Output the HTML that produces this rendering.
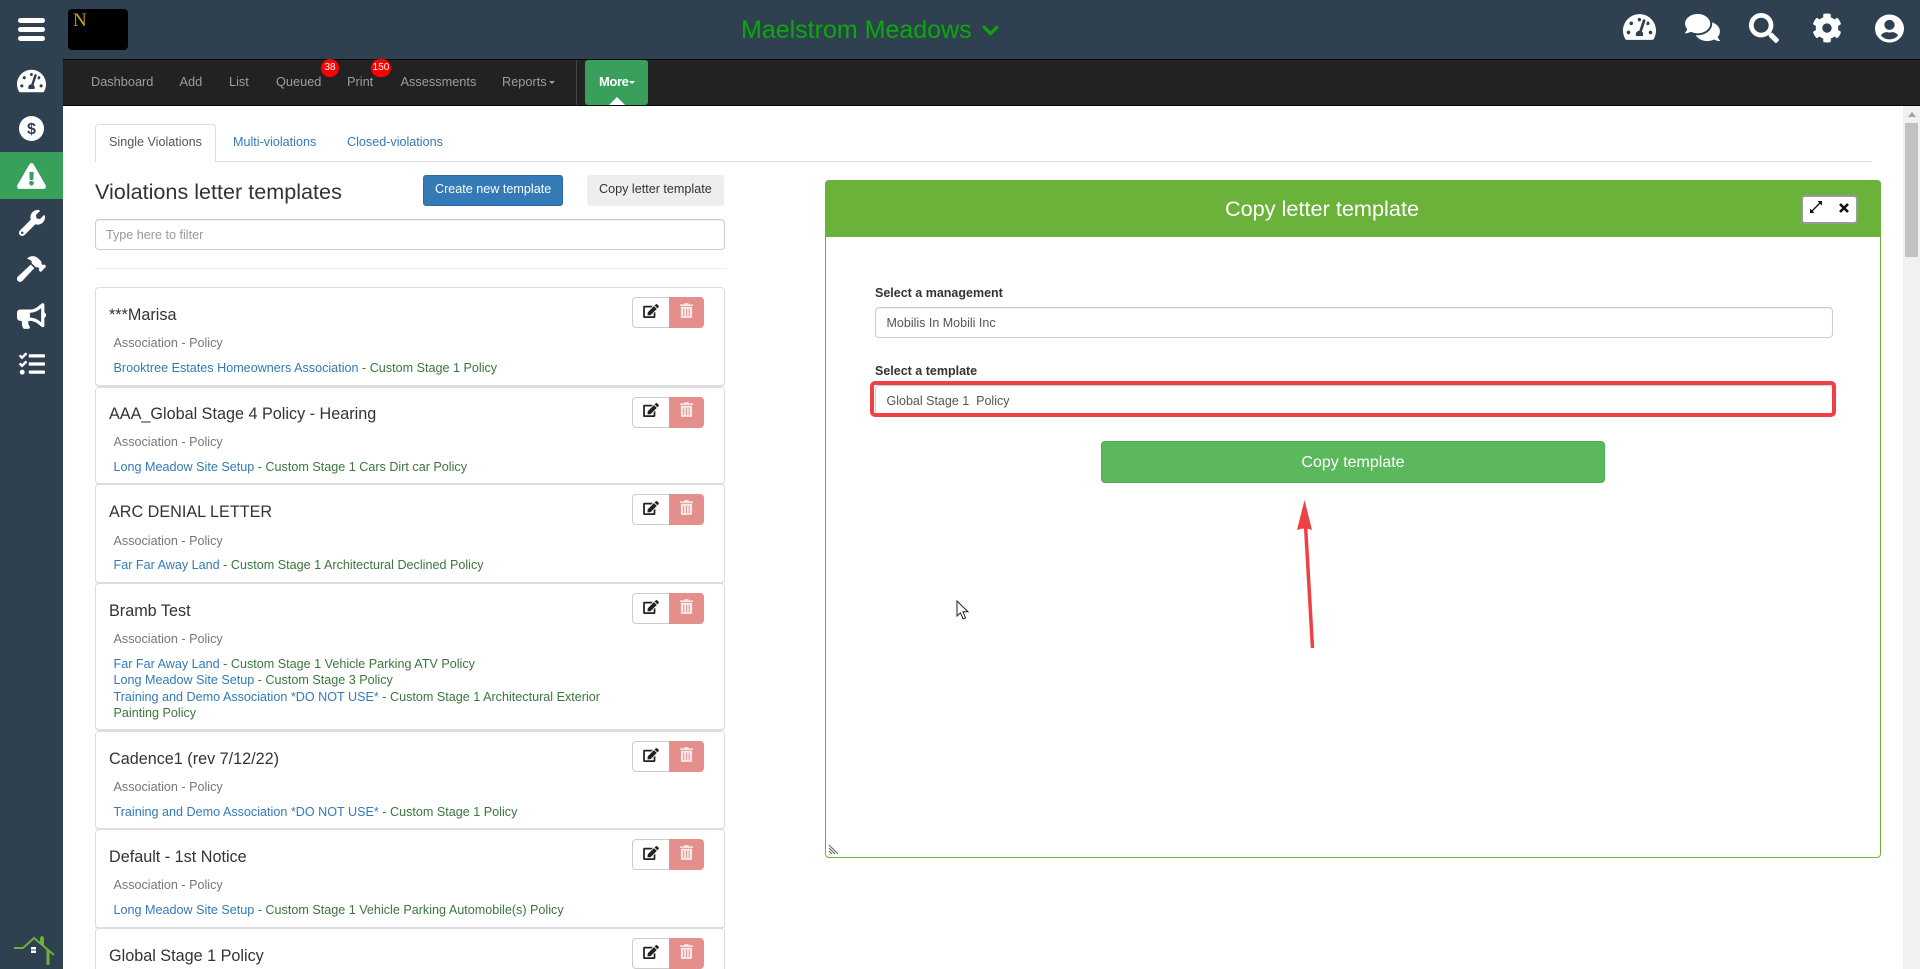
<!DOCTYPE html>
<html lang="en">
<head>
<meta charset="utf-8">
<title>Violations letter templates</title>
<style>
html,body{margin:0;padding:0;width:1920px;height:969px;overflow:hidden;background:#fff;font-family:"Liberation Sans",Arial,sans-serif;font-size:12.6px;color:#333}
*{box-sizing:border-box}
#page{position:absolute;left:0;top:0;width:1920px;height:969px;overflow:hidden;background:#fff}
.a{position:absolute}
.t{position:absolute;white-space:nowrap;height:20px;line-height:20px}
svg{position:absolute;display:block}
a{color:#337ab7;text-decoration:none}
.item{position:absolute;left:95px;width:630px;border:1px solid #ddd;border-bottom-width:2px;border-radius:4px;background:#fff}
.ti{font-size:16.2px;color:#333;left:109px}
.su{color:#777;left:113.500px}
.li{left:113.500px;color:#3c763d}
.ed{position:absolute;left:632px;width:38px;height:31px;border:1px solid #ccc;border-right:0;border-radius:4px 0 0 4px;background:#fff}
.de{position:absolute;left:669px;width:35px;height:31px;border-radius:0 4px 4px 0;background:#e58f8d}
.nav{color:#9d9d9d;font-size:12.75px;top:72px}
.badge{position:absolute;background:#f00;color:#fff;font-size:10px;text-align:center;border-radius:10px;height:18px;line-height:17px;top:59px}
</style>
</head>
<body>
<div id="page">
<!-- top bar -->
<div class="a" style="left:0;top:0;width:1920px;height:59px;background:#2f4051"></div>
<!-- sidebar -->
<div class="a" style="left:0;top:0;width:63px;height:969px;background:#2f4051"></div>
<div class="a" style="left:0;top:152px;width:63px;height:47px;background:#38a05b"></div>
<!-- hamburger -->
<div class="a" style="left:18px;top:18px;width:27px;height:5px;background:#fff;border-radius:3px"></div>
<div class="a" style="left:18px;top:27px;width:27px;height:5px;background:#fff;border-radius:3px"></div>
<div class="a" style="left:18px;top:36px;width:27px;height:5px;background:#fff;border-radius:3px"></div>
<!-- logo -->
<div class="a" style="left:68px;top:9px;width:60px;height:41px;background:#000;border-radius:4px"></div>
<div class="t" style="left:73px;top:11px;font:19px/20px 'Liberation Serif',serif;color:#c9a227">N</div>

<!-- sidebar icons -->
<svg style="left:17px;top:68px" width="29" height="26" viewBox="0 0 576 512" fill="#fff"><path d="M288 32C128.94 32 0 160.94 0 320c0 52.8 14.25 102.26 39.06 144.8 5.61 9.62 16.3 15.2 27.44 15.2h443c11.14 0 21.83-5.58 27.44-15.2C561.75 422.26 576 372.8 576 320c0-159.06-128.94-288-288-288zm0 64c14.71 0 26.58 10.13 30.32 23.65-1.11 2.26-2.64 4.23-3.45 6.67l-9.22 27.67c-5.13 3.49-10.97 6.01-17.64 6.01-17.67 0-32-14.33-32-32S270.33 96 288 96zM96 384c-17.67 0-32-14.33-32-32s14.33-32 32-32 32 14.33 32 32-14.33 32-32 32zm48-160c-17.67 0-32-14.33-32-32s14.33-32 32-32 32 14.33 32 32-14.33 32-32 32zm246.77-72.41l-61.33 184C343.13 347.33 352 364.54 352 384c0 11.72-3.38 22.55-8.88 32H232.88c-5.5-9.45-8.88-20.28-8.88-32 0-33.94 26.5-61.43 59.9-63.59l61.34-184.01c4.17-12.56 17.73-19.45 30.36-15.17 12.57 4.19 19.35 17.79 15.17 30.36zm14.66 57.2l15.52-46.55c3.47-1.29 7.13-2.23 11.05-2.23 17.67 0 32 14.33 32 32s-14.33 32-32 32c-11.38-.01-20.89-6.28-26.57-15.22zM480 384c-17.67 0-32-14.33-32-32s14.33-32 32-32 32 14.33 32 32-14.33 32-32 32z"/></svg>
<svg style="left:19px;top:116px" width="25" height="25" viewBox="0 0 25 25"><circle cx="12.5" cy="12.5" r="12.5" fill="#fff"/><text x="12.5" y="18" text-anchor="middle" font-family="Liberation Sans,sans-serif" font-weight="700" font-size="16" fill="#2f4051">$</text></svg>
<svg style="left:17px;top:163px" width="29" height="26" viewBox="0 0 576 512"><path fill="#fff" d="M569.517 440.013C587.975 472.007 564.806 512 527.94 512H48.054c-36.937 0-59.999-40.055-41.577-71.987L246.423 23.985c18.467-32.009 64.72-31.951 83.154 0l239.94 416.028z"/><path fill="#38a05b" d="M288 354c-25.405 0-46 20.595-46 46s20.595 46 46 46 46-20.595 46-46-20.595-46-46-46zm-43.673-165.346l7.418 136c.347 6.364 5.609 11.346 11.982 11.346h48.546c6.373 0 11.635-4.982 11.982-11.346l7.418-136c.375-6.874-5.098-12.654-11.982-12.654h-63.383c-6.884 0-12.356 5.78-11.981 12.654z"/></svg>
<svg style="left:19px;top:210px" width="26" height="26" viewBox="0 0 512 512" fill="#fff"><path d="M507.73 109.1c-2.24-9.03-13.54-12.09-20.12-5.51l-74.36 74.36-67.88-11.31-11.31-67.88 74.36-74.36c6.62-6.62 3.43-17.9-5.66-20.16-47.38-11.74-99.55.91-136.58 37.93-39.64 39.64-50.55 97.1-34.05 147.2L18.74 402.76c-24.99 24.99-24.99 65.51 0 90.5 24.99 24.99 65.51 24.99 90.5 0l213.21-213.21c50.12 16.71 107.47 5.68 147.37-34.22 37.07-37.07 49.7-89.32 37.91-136.73zM64 472c-13.25 0-24-10.75-24-24 0-13.26 10.75-24 24-24s24 10.74 24 24c0 13.25-10.75 24-24 24z"/></svg>
<svg style="left:17px;top:256px" width="29" height="26" viewBox="0 0 576 512" fill="#fff"><path d="M571.31 193.94l-22.63-22.63c-6.25-6.25-16.38-6.25-22.63 0l-11.31 11.31-28.9-28.9c5.63-21.31.36-44.9-16.35-61.61l-45.25-45.25c-62.48-62.48-163.79-62.48-226.28 0l90.51 45.25v18.75c0 16.97 6.74 33.25 18.75 45.25l49.14 49.14c16.71 16.71 40.3 21.98 61.61 16.35l28.9 28.9-11.31 11.31c-6.25 6.25-6.25 16.38 0 22.63l22.63 22.63c6.25 6.25 16.38 6.25 22.63 0l90.51-90.51c6.23-6.24 6.23-16.37-.02-22.62zm-286.72-15.2c-3.7-3.7-6.84-7.79-9.85-11.95L19.64 404.96c-25.57 23.88-26.26 64.19-1.53 88.93s65.05 24.05 88.93-1.53l238.13-255.07c-3.96-2.91-7.9-5.87-11.44-9.41l-49.14-49.14z"/></svg>
<svg style="left:17px;top:303px" width="29" height="26" viewBox="0 0 576 512" fill="#fff"><path d="M576 240c0-23.63-12.95-44.04-32-55.12V32.01C544 23.26 537.02 0 512 0c-7.12 0-14.19 2.38-19.98 7.02l-85.03 68.03C364.28 109.19 310.66 128 256 128H64c-35.35 0-64 28.65-64 64v96c0 35.35 28.65 64 64 64h33.7c-1.39 10.48-2.18 21.14-2.18 32 0 39.77 9.26 77.35 25.56 110.94 5.19 10.69 16.52 17.06 28.4 17.06h74.28c26.05 0 41.69-29.84 25.9-50.56-16.4-21.52-26.15-48.36-26.15-77.44 0-11.11 1.62-21.79 4.41-32H256c54.66 0 108.28 18.81 150.98 52.95l85.03 68.03a32.023 32.023 0 0 0 19.98 7.02c24.92 0 32-22.78 32-32V295.13C563.05 284.04 576 263.63 576 240zm-96 141.42l-33.05-26.44C392.95 311.78 325.12 288 256 288v-96c69.12 0 136.95-23.78 190.95-66.98L480 98.58v282.84z"/></svg>
<svg style="left:19px;top:351px" width="26" height="26" viewBox="0 0 512 512" fill="#fff"><path d="M139.61 35.5a12 12 0 0 0-17 0L58.93 98.81l-22.7-22.12a12 12 0 0 0-17 0L3.53 92.41a12 12 0 0 0 0 17l47.59 47.4a12.78 12.78 0 0 0 17.61 0l15.59-15.62L156.52 69a12.09 12.09 0 0 0 .09-17zm0 159.19a12 12 0 0 0-17 0l-63.68 63.72-22.7-22.1a12 12 0 0 0-17 0L3.53 252a12 12 0 0 0 0 17L51 316.5a12.77 12.77 0 0 0 17.6 0l15.7-15.69 72.2-72.22a12 12 0 0 0 .09-16.9zM64 368c-26.49 0-48.59 21.5-48.59 48S37.53 464 64 464a48 48 0 0 0 0-96zm432 16H208a16 16 0 0 0-16 16v32a16 16 0 0 0 16 16h288a16 16 0 0 0 16-16v-32a16 16 0 0 0-16-16zm0-320H208a16 16 0 0 0-16 16v32a16 16 0 0 0 16 16h288a16 16 0 0 0 16-16V80a16 16 0 0 0-16-16zm0 160H208a16 16 0 0 0-16 16v32a16 16 0 0 0 16 16h288a16 16 0 0 0 16-16v-32a16 16 0 0 0-16-16z"/></svg>
<!-- home logo -->
<svg style="left:0;top:930px" width="63" height="39" viewBox="0 0 63 39"><path d="M14 18h9L34 8l20 17" fill="none" stroke="#6ab23a" stroke-width="2"/><path d="M48 20v15" stroke="#6ab23a" stroke-width="3" fill="none"/><path d="M40 13V8q2-4 4 0v8z" fill="#6ab23a"/><rect x="31" y="17" width="5" height="2.5" fill="#fff"/><rect x="31" y="20.5" width="5" height="2.5" fill="#fff"/></svg>

<!-- title -->
<div class="t" style="left:741px;top:15px;height:30px;line-height:30px;font-size:25px;color:#0aa90a">Maelstrom Meadows</div>
<svg style="left:982px;top:21px" width="17" height="19" viewBox="0 0 448 512" fill="#0aa90a"><path d="M207.029 381.476L12.686 187.132c-9.373-9.373-9.373-24.569 0-33.941l22.667-22.667c9.357-9.357 24.522-9.375 33.901-.04L224 284.505l154.745-154.021c9.379-9.335 24.544-9.317 33.901.04l22.667 22.667c9.373 9.373 9.373 24.569 0 33.941L240.971 381.476c-9.373 9.372-24.569 9.372-33.942 0z"/></svg>

<!-- top right icons -->
<svg style="left:1623px;top:12px" width="33" height="30" viewBox="0 0 576 512" fill="#fff"><path d="M288 32C128.94 32 0 160.94 0 320c0 52.8 14.25 102.26 39.06 144.8 5.61 9.62 16.3 15.2 27.44 15.2h443c11.14 0 21.83-5.58 27.44-15.2C561.75 422.26 576 372.8 576 320c0-159.06-128.94-288-288-288zm0 64c14.71 0 26.58 10.13 30.32 23.65-1.11 2.26-2.64 4.23-3.45 6.67l-9.22 27.67c-5.13 3.49-10.97 6.01-17.64 6.01-17.67 0-32-14.33-32-32S270.33 96 288 96zM96 384c-17.67 0-32-14.33-32-32s14.33-32 32-32 32 14.33 32 32-14.33 32-32 32zm48-160c-17.67 0-32-14.33-32-32s14.33-32 32-32 32 14.33 32 32-14.33 32-32 32zm246.77-72.41l-61.33 184C343.13 347.33 352 364.54 352 384c0 11.72-3.38 22.55-8.88 32H232.88c-5.5-9.45-8.88-20.28-8.88-32 0-33.94 26.5-61.43 59.9-63.59l61.34-184.01c4.17-12.56 17.73-19.45 30.36-15.17 12.57 4.19 19.35 17.79 15.17 30.36zm14.66 57.2l15.52-46.55c3.47-1.29 7.13-2.23 11.05-2.23 17.67 0 32 14.33 32 32s-14.33 32-32 32c-11.38-.01-20.89-6.28-26.57-15.22zM480 384c-17.67 0-32-14.33-32-32s14.33-32 32-32 32 14.33 32 32-14.33 32-32 32z"/></svg>
<svg style="left:1685px;top:12px" width="35" height="31" viewBox="0 0 576 512" fill="#fff"><path d="M416 192c0-88.4-93.1-160-208-160S0 103.6 0 192c0 34.3 14.1 65.9 38 92-13.4 30.2-35.5 54.2-35.8 54.5-2.2 2.3-2.8 5.7-1.5 8.7S4.8 352 8 352c36.6 0 66.9-12.3 88.7-25 32.2 15.7 70.3 25 111.3 25 114.9 0 208-71.6 208-160zm122 220c23.9-26 38-57.7 38-92 0-66.9-53.5-124.2-129.3-148.1.9 6.6 1.3 13.3 1.3 20.1 0 105.9-107.7 192-240 192-10.8 0-21.3-.8-31.7-1.9C207.8 439.6 281.8 480 368 480c41 0 79.1-9.2 111.3-25 21.8 12.7 52.1 25 88.7 25 3.2 0 6.1-1.9 7.3-4.8 1.3-2.9.7-6.3-1.5-8.7-.3-.3-22.4-24.2-35.8-54.5z"/></svg>
<svg style="left:1749px;top:13px" width="30" height="30" viewBox="0 0 512 512" fill="#fff"><path d="M505 442.7L405.3 343c-4.5-4.5-10.6-7-17-7H372c27.6-35.3 44-79.7 44-128C416 93.1 322.9 0 208 0S0 93.1 0 208s93.1 208 208 208c48.3 0 92.7-16.4 128-44v16.3c0 6.4 2.5 12.5 7 17l99.7 99.7c9.4 9.4 24.6 9.4 33.9 0l28.3-28.3c9.4-9.4 9.4-24.6.1-34zM208 336c-70.7 0-128-57.2-128-128 0-70.7 57.2-128 128-128 70.7 0 128 57.2 128 128 0 70.7-57.2 128-128 128z"/></svg>
<svg style="left:1812px;top:13px" width="30" height="30" viewBox="0 0 512 512" fill="#fff"><path d="M487.4 315.7l-42.6-24.6c4.3-23.2 4.3-47 0-70.2l42.6-24.6c4.9-2.8 7.1-8.6 5.5-14-11.1-35.6-30-67.8-54.7-94.6-3.8-4.1-10-5.1-14.8-2.3L380.8 110c-17.9-15.4-38.5-27.3-60.8-35.1V25.8c0-5.6-3.9-10.5-9.4-11.7-36.7-8.2-74.3-7.8-109.2 0-5.5 1.2-9.4 6.1-9.4 11.7V75c-22.2 7.9-42.8 19.8-60.8 35.1L88.7 85.5c-4.9-2.8-11-1.9-14.8 2.3-24.7 26.7-43.6 58.9-54.7 94.6-1.7 5.4.6 11.2 5.5 14L67.3 221c-4.3 23.2-4.3 47 0 70.2l-42.6 24.6c-4.9 2.8-7.1 8.6-5.5 14 11.1 35.6 30 67.8 54.7 94.6 3.8 4.1 10 5.1 14.8 2.3l42.6-24.6c17.9 15.4 38.5 27.3 60.8 35.1v49.2c0 5.6 3.9 10.5 9.4 11.7 36.7 8.2 74.3 7.8 109.2 0 5.5-1.2 9.4-6.1 9.4-11.7v-49.2c22.2-7.9 42.8-19.8 60.8-35.1l42.6 24.6c4.9 2.8 11 1.9 14.8-2.3 24.7-26.7 43.6-58.9 54.7-94.6 1.5-5.5-.7-11.3-5.6-14.1zM256 336c-44.1 0-80-35.9-80-80s35.9-80 80-80 80 35.9 80 80-35.9 80-80 80z"/></svg>
<svg style="left:1875px;top:14px" width="29" height="29" viewBox="0 0 496 512" fill="#fff" preserveAspectRatio="none"><path d="M248 8C111 8 0 119 0 256s111 248 248 248 248-111 248-248S385 8 248 8zm0 96c48.6 0 88 39.4 88 88s-39.4 88-88 88-88-39.4-88-88 39.4-88 88-88zm0 344c-58.7 0-111.3-26.6-146.5-68.2 18.8-35.4 55.6-59.8 98.5-59.8 2.4 0 4.8.4 7.1 1.1 13 4.2 26.6 6.9 40.9 6.9 14.3 0 28-2.7 40.9-6.9 2.3-.7 4.7-1.1 7.1-1.1 42.9 0 79.7 24.4 98.5 59.8C359.3 421.4 306.7 448 248 448z"/></svg>

<!-- nav bar -->
<div class="a" style="left:63px;top:59px;width:1857px;height:47px;background:#222;border-top:1px solid #080808;border-bottom:1px solid #080808"></div>
<div class="t nav" style="left:91px">Dashboard</div>
<div class="t nav" style="left:179.500px">Add</div>
<div class="t nav" style="left:229px">List</div>
<div class="t nav" style="left:276px">Queued</div>
<div class="t nav" style="left:347px">Print</div>
<div class="t nav" style="left:400.500px">Assessments</div>
<div class="t nav" style="left:502px">Reports</div>
<div class="a" style="left:549px;top:81px;border:3px solid transparent;border-top-color:#9d9d9d;border-bottom:0"></div>
<div class="badge" style="left:321px;width:18px">38</div>
<div class="badge" style="left:371px;width:20px">150</div>
<div class="a" style="left:576px;top:60px;width:1px;height:45px;background:#444"></div>
<div class="a" style="left:585px;top:60px;width:63px;height:45px;background:#38a05b;border-radius:3px"></div>
<div class="t" style="left:599px;top:72px;font-size:13px;color:#fff;font-weight:700;letter-spacing:-.4px">More</div>
<div class="a" style="left:629px;top:81px;border:3px solid transparent;border-top-color:#fff;border-bottom:0"></div>
<div class="a" style="left:609px;top:97px;border:8px solid transparent;border-bottom-color:#fff;border-top:0"></div>

<!-- tabs -->
<div class="a" style="left:95px;top:161px;width:1777px;height:1px;background:#ddd"></div>
<div class="a" style="left:95px;top:124px;width:121px;height:38px;border:1px solid #ddd;border-bottom:0;border-radius:4px 4px 0 0;background:#fff"></div>
<div class="t" style="left:109px;top:131.500px;color:#555">Single Violations</div>
<div class="t" style="left:233px;top:131.500px"><a>Multi-violations</a></div>
<div class="t" style="left:347px;top:131.500px"><a>Closed-violations</a></div>

<!-- heading -->
<div class="t" style="left:95px;top:177px;height:30px;line-height:30px;font-size:21.6px;color:#333">Violations letter templates</div>
<div class="a" style="left:423px;top:175px;width:140px;height:31px;background:#337ab7;border:1px solid #2e6da4;border-radius:3px"></div>
<div class="t" style="left:435px;top:179px;color:#fff">Create new template</div>
<div class="a" style="left:587px;top:175px;width:137px;height:31px;background:#eee;border-radius:3px"></div>
<div class="t" style="left:599px;top:179px;color:#333">Copy letter template</div>
<div class="a" style="left:95px;top:219px;width:630px;height:31px;border:1px solid #ccc;border-radius:4px;box-shadow:inset 0 1px 1px rgba(0,0,0,.075);background:#fff"></div>
<div class="t" style="left:106px;top:225px;color:#999">Type here to filter</div>
<div class="a" style="left:95px;top:268px;width:630px;height:1px;background:#eee"></div>

<!-- list -->
<div class="item" style="top:287px;height:100px"></div>
<div class="item" style="top:387px;height:98px"></div>
<div class="item" style="top:484px;height:100px"></div>
<div class="item" style="top:583px;height:148px"></div>
<div class="item" style="top:731px;height:99px"></div>
<div class="item" style="top:829px;height:100px"></div>
<div class="item" style="top:928px;height:60px"></div>

<div class="t ti" style="top:305px">***Marisa</div>
<div class="t su" style="top:333px">Association - Policy</div>
<div class="t li" style="top:358px"><a>Brooktree Estates Homeowners Association</a> - Custom Stage 1 Policy</div>

<div class="t ti" style="top:404px">AAA_Global Stage 4 Policy - Hearing</div>
<div class="t su" style="top:431.500px">Association - Policy</div>
<div class="t li" style="top:457px"><a>Long Meadow Site Setup</a> - Custom Stage 1 Cars Dirt car Policy</div>

<div class="t ti" style="top:502px">ARC DENIAL LETTER</div>
<div class="t su" style="top:530.500px">Association - Policy</div>
<div class="t li" style="top:555px"><a>Far Far Away Land</a> - Custom Stage 1 Architectural Declined Policy</div>

<div class="t ti" style="top:601px">Bramb Test</div>
<div class="t su" style="top:628.500px">Association - Policy</div>
<div class="t li" style="top:654px"><a>Far Far Away Land</a> - Custom Stage 1 Vehicle Parking ATV Policy</div>
<div class="t li" style="top:670px"><a>Long Meadow Site Setup</a> - Custom Stage 3 Policy</div>
<div class="t li" style="top:687px"><a>Training and Demo Association *DO NOT USE*</a> - Custom Stage 1 Architectural Exterior</div>
<div class="t li" style="top:703px">Painting Policy</div>

<div class="t ti" style="top:749px">Cadence1 (rev 7/12/22)</div>
<div class="t su" style="top:776.500px">Association - Policy</div>
<div class="t li" style="top:802px"><a>Training and Demo Association *DO NOT USE*</a> - Custom Stage 1 Policy</div>

<div class="t ti" style="top:847px">Default - 1st Notice</div>
<div class="t su" style="top:874.500px">Association - Policy</div>
<div class="t li" style="top:900px"><a>Long Meadow Site Setup</a> - Custom Stage 1 Vehicle Parking Automobile(s) Policy</div>

<div class="t ti" style="top:946px">Global Stage 1 Policy</div>

<!-- edit/delete buttons -->
<svg width="0" height="0"><defs>
<symbol id="ed" viewBox="0 0 576 512"><path fill="#222" d="M402.6 83.2l90.2 90.2c3.8 3.8 3.8 10 0 13.8L274.4 405.6l-92.8 10.3c-12.4 1.4-22.9-9.1-21.5-21.5l10.3-92.8L388.8 83.2c3.8-3.8 10-3.8 13.8 0zm162-22.9l-48.8-48.8c-15.2-15.2-39.9-15.2-55.2 0l-35.4 35.4c-3.8 3.8-3.8 10 0 13.8l90.2 90.2c3.8 3.8 10 3.8 13.8 0l35.4-35.4c15.2-15.3 15.2-40 0-55.2zM384 346.2V448H64V128h229.8c3.2 0 6.2-1.3 8.5-3.5l40-40c7.6-7.6 2.2-20.5-8.5-20.5H48C21.5 64 0 85.5 0 112v352c0 26.5 21.5 48 48 48h352c26.5 0 48-21.5 48-48V306.2c0-10.7-12.9-16-20.5-8.5l-40 40c-2.2 2.3-3.5 5.3-3.5 8.5z"/></symbol>
<symbol id="tr" viewBox="0 0 14 16"><path fill="#fff" fill-opacity=".8" d="M5 0h4l.6 1.4H14v1.6H0V1.4h4.4zM1 4h12v11q0 1-1 1H2q-1 0-1-1zm2.4 2v8h1V6zm3 0v8h1V6zm3 0v8h1V6z"/></symbol>
</defs></svg>

<div class="ed" style="top:297px"></div><div class="de" style="top:297px"></div>
<svg style="left:643px;top:304px" width="16" height="14"><use href="#ed"/></svg><svg style="left:680px;top:303px" width="13" height="15"><use href="#tr"/></svg>
<div class="ed" style="top:397px"></div><div class="de" style="top:397px"></div>
<svg style="left:643px;top:403px" width="16" height="14"><use href="#ed"/></svg><svg style="left:680px;top:402px" width="13" height="15"><use href="#tr"/></svg>
<div class="ed" style="top:494px"></div><div class="de" style="top:494px"></div>
<svg style="left:643px;top:501px" width="16" height="14"><use href="#ed"/></svg><svg style="left:680px;top:500px" width="13" height="15"><use href="#tr"/></svg>
<div class="ed" style="top:593px"></div><div class="de" style="top:593px"></div>
<svg style="left:643px;top:600px" width="16" height="14"><use href="#ed"/></svg><svg style="left:680px;top:599px" width="13" height="15"><use href="#tr"/></svg>
<div class="ed" style="top:741px"></div><div class="de" style="top:741px"></div>
<svg style="left:643px;top:748px" width="16" height="14"><use href="#ed"/></svg><svg style="left:680px;top:747px" width="13" height="15"><use href="#tr"/></svg>
<div class="ed" style="top:839px"></div><div class="de" style="top:839px"></div>
<svg style="left:643px;top:846px" width="16" height="14"><use href="#ed"/></svg><svg style="left:680px;top:845px" width="13" height="15"><use href="#tr"/></svg>
<div class="ed" style="top:938px"></div><div class="de" style="top:938px"></div>
<svg style="left:643px;top:945px" width="16" height="14"><use href="#ed"/></svg><svg style="left:680px;top:944px" width="13" height="15"><use href="#tr"/></svg>

<!-- right panel -->
<div class="a" style="left:825px;top:180px;width:1056px;height:678px;border:1px solid #6ab23a;border-radius:4px;background:#fff"></div>
<div class="a" style="left:825px;top:180px;width:1056px;height:57px;background:#6ab23a;border-radius:4px 4px 0 0"></div>
<div class="t" style="left:1122px;width:400px;top:195.500px;height:26px;line-height:26px;text-align:center;font-size:21.7px;color:#fff">Copy letter template</div>
<div class="a" style="left:1800.500px;top:194.500px;width:57px;height:29px;background:#fff;border:2px solid #999;border-radius:4px"></div>
<svg style="left:1810px;top:201px" width="12" height="12" viewBox="0 0 12 12"><path d="M2 10L10 2" stroke="#111" stroke-width="1.300"/><path d="M7.500 0H12V4.500zM4.500 12H0V7.500z" fill="#111"/></svg>
<svg style="left:1838.500px;top:202.500px" width="10" height="10" viewBox="0 0 10 10"><path d="M1 1l8 8M9 1l-8 8" stroke="#111" stroke-width="2.600"/></svg>
<svg style="left:828px;top:844px" width="12" height="12" viewBox="0 0 12 12"><path d="M1 1l9 9M1 4l6 6M1 7l3 3" stroke="#666" stroke-width="1.100"/></svg>

<div class="t" style="left:875px;top:283px;font-weight:700;font-size:12.5px;color:#333">Select a management</div>
<div class="a" style="left:875px;top:307px;width:958px;height:31px;border:1px solid #ccc;border-radius:4px;background:#fff;box-shadow:inset 0 1px 1px rgba(0,0,0,.075)"></div>
<div class="t" style="left:886.500px;top:313px;font-size:12.5px;color:#555">Mobilis In Mobili Inc</div>
<div class="t" style="left:875px;top:361px;font-weight:700;font-size:12.5px;color:#333">Select a template</div>
<div class="a" style="left:875px;top:385px;width:958px;height:31px;border:1px solid #ccc;border-radius:4px;background:#fff"></div>
<div class="t" style="left:886.500px;top:391px;font-size:12.5px;color:#555;white-space:pre">Global Stage 1  Policy</div>
<div class="a" style="left:870px;top:381px;width:966px;height:36px;border:4px solid #ef4044;border-radius:5px"></div>
<div class="a" style="left:1101px;top:441px;width:504px;height:42px;background:#5cb85c;border:1px solid #4cae4c;border-radius:4px"></div>
<div class="t" style="left:1101px;width:504px;top:453px;text-align:center;font-size:16px;color:#fff">Copy template</div>

<!-- annotation arrow -->
<svg style="left:1290px;top:495px" width="40" height="160" viewBox="1290 495 40 160"><path d="M1312.500 648L1305.500 525" stroke="#ef4044" stroke-width="3.500" fill="none"/><path d="M1304.500 500l-7.500 30q8-3 15 0z" fill="#ef4044"/></svg>
<!-- cursor -->
<svg style="left:956px;top:600px" width="14" height="21" viewBox="0 0 14 21"><path d="M1 1v15l3.500-3.200 2.500 6 2.500-1-2.500-6H12z" fill="#fff" stroke="#222" stroke-width="1"/></svg>

<!-- scrollbar -->
<div class="a" style="left:1903px;top:106px;width:17px;height:863px;background:#f1f1f1"></div>
<div class="a" style="left:1908px;top:112px;border:4px solid transparent;border-bottom:5px solid #a3a3a3;border-top:0"></div>
<div class="a" style="left:1905px;top:123px;width:13px;height:134px;background:#c1c1c1"></div>
</div>
</body>
</html>
